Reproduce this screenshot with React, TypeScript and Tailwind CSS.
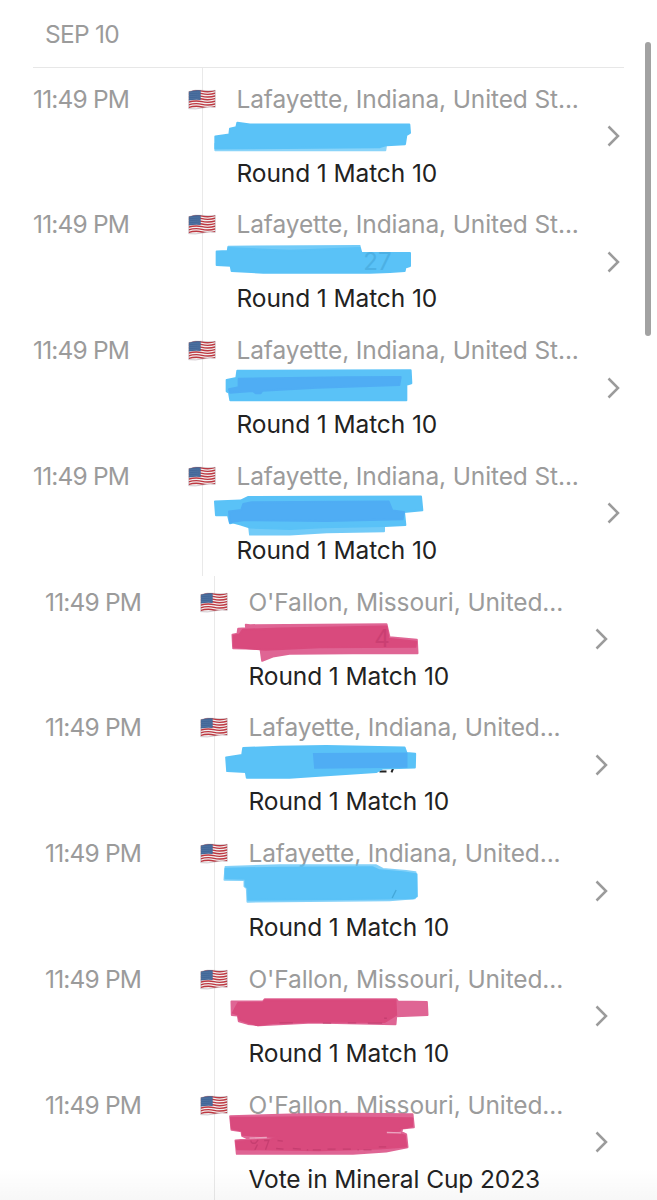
import { ReactNode } from "react";

type Entry = {
  time: string;
  place: string;
  title: string;
  // vertical offset of the marker drawing inside its line
  dy: number;
  marker: ReactNode;
};

const BLUE = "#5ac2f7";
const DEEP_BLUE = "#4fadf4";
const PINK = "#d94a7d";
const LIGHT_PINK = "#df6594";

function Ink({ d, color, opacity = 1 }: { d: string; color: string; opacity?: number }) {
  return (
    <path
      d={d}
      fill={color}
      stroke={color}
      strokeWidth="6"
      strokeLinejoin="round"
      opacity={opacity}
    />
  );
}

function Trace({ d, color }: { d: string; color: string }) {
  return <path d={d} fill="none" stroke={color} strokeWidth="4" opacity="0.4" />;
}

const firstEntries: Entry[] = [
  {
    time: "11:49 PM",
    place: "Lafayette, Indiana, United St...",
    title: "Round 1 Match 10",
    dy: -37.5,
    marker: (
      <>
        <Ink color={BLUE} opacity={0.7} d="M106 190L618 194L616 209L106 209Z" />
        <Ink color={BLUE} d="M106 168L148 162L150 145L169 140L172 127L210 132L688 132L690 157L679 164L675 191L620 194L600 200L106 204Z" />
      </>
    ),
  },
  {
    time: "11:49 PM",
    place: "Lafayette, Indiana, United St...",
    title: "Round 1 Match 10",
    dy: -43.25,
    marker: (
      <>
        <Ink color={BLUE} opacity={0.85} d="M145 141L539 139L539 180L145 180Z" />
        <Ink color={BLUE} d="M110 155L143 154L145 145L330 153L540 145L544 159L690 160L690 199L676 203L674 214L630 217L570 219L250 219L155 214L152 198L110 196Z" />
        <text x="550" y="211" fontSize="72" fill="#3f9fd2" opacity="0.5" fontFamily="Inter">
          27
        </text>
      </>
    ),
  },
  {
    time: "11:49 PM",
    place: "Lafayette, Indiana, United St...",
    title: "Round 1 Match 10",
    dy: -39,
    marker: (
      <>
        <Ink color={BLUE} d="M172 122L692 121L694 160L679 164L679 211L151 211L147 188L140 184L140 150L169 144Z" />
        <Ink color={DEEP_BLUE} d="M176 146L500 142L662 141L658 165L410 173L247 182L242 190L228 190L218 183L150 188L147 178L176 172Z" />
      </>
    ),
  },
  {
    time: "11:49 PM",
    place: "Lafayette, Indiana, United St...",
    title: "Round 1 Match 10",
    dy: -34.75,
    marker: (
      <>
        <Ink color={BLUE} opacity={0.85} d="M207 195L612 195L612 213L440 216L330 223L210 223Z" />
        <Ink color={BLUE} d="M105 124L182 121L205 110L723 109L727 150L672 155L676 194L614 197L430 201L330 206L210 202L182 193L160 187L150 189L144 165L108 165Z" />
        <Ink color={DEEP_BLUE} d="M190 131L215 126L626 124L637 151L672 155L668 177L440 182L190 180L163 184L150 187L147 154L184 149Z" />
      </>
    ),
  },
];

const secondEntries: Entry[] = [
  {
    time: "11:49 PM",
    place: "O'Fallon, Missouri, United...",
    title: "Round 1 Match 10",
    dy: -35.5,
    marker: (
      <>
        <Ink color={LIGHT_PINK} d="M199 118L212 119L621 116L630 155L712 163L714 203L520 203L330 205L280 213L248 226L243 190L161 188L159 148L174 145L176 130L200 128Z" />
        <Ink color={PINK} d="M162 151L180 147L190 133L300 129L621 123L627 160L710 169L708 184L420 185L258 193L163 184Z" />
        <text x="584" y="184" fontSize="72" fill="#b62f63" opacity="0.4" fontFamily="Inter">
          4
        </text>
      </>
    ),
  },
  {
    time: "11:49 PM",
    place: "Lafayette, Indiana, United...",
    title: "Round 1 Match 10",
    dy: -36.25,
    marker: (
      <>
        <path d="M600 185L621 185M642 173L636 188" fill="none" stroke="#222222" strokeWidth="6" />
        <Ink color={BLUE} d="M191 115L300 111L440 109L675 113L681 130L707 132L706 173L610 176L590 187L430 197L330 204L202 204L199 187L143 184L140 143L188 136Z" />
        <path d="M400 130L684 128L684 174L404 177Z" fill={DEEP_BLUE} />
      </>
    ),
  },
  {
    time: "11:49 PM",
    place: "Lafayette, Indiana, United...",
    title: "Round 1 Match 10",
    dy: -37,
    marker: (
      <>
        <Ink color={BLUE} opacity={0.75} d="M138 96L300 91L590 91L610 102L680 108L708 112L706 190L630 196L204 200L202 160L195 154L195 135L135 134Z" />
        <Ink color={BLUE} d="M138 101L300 98L580 97L600 106L670 112L711 118L712 184L700 190L430 193L206 194L206 160L198 152L198 131L138 130Z" />
        <Trace color="#237fac" d="M650 165L638 189" />
      </>
    ),
  },
  {
    time: "11:49 PM",
    place: "O'Fallon, Missouri, United...",
    title: "Round 1 Match 10",
    dy: -37.75,
    marker: (
      <>
        <Ink color={LIGHT_PINK} d="M156 124L250 124L256 117L650 117L656 124L742 125L744 164L650 168L648 192L400 187L240 195L205 191L178 183L175 166L157 164Z" />
        <Ink color={PINK} d="M176 128L250 127L257 120L648 120L650 164L616 185L400 184L280 188L235 195L205 187L180 178L176 163L160 158Z" />
        <Trace color="#a92e5c" d="M300 188L340 188M430 189L455 189M505 188L530 188M565 189L608 189M614 174L622 174" />
      </>
    ),
  },
  {
    time: "11:49 PM",
    place: "O'Fallon, Missouri, United...",
    title: "Vote in Mineral Cup 2023",
    dy: -43.5,
    marker: (
      <>
        <Ink color={LIGHT_PINK} d="M152 107L360 101L520 100L699 101L703 140L668 144L666 155L680 162L684 200L620 213L520 220L172 220L168 180L208 176L188 166L186 152L156 148Z" />
        <Ink color={PINK} d="M154 112L400 110L698 113L698 137L664 144L660 151L620 154L676 165L680 198L600 204L420 209L173 206L170 183L270 178L300 170L190 163L188 151L157 144Z" />
        {/* paler gaps between the strokes */}
        <path d="M210 173L262 171M622 156L664 157" fill="none" stroke="#eba3bf" strokeWidth="4" />
        {/* smudged leftovers showing through the ink */}
        <Trace color="#a92e5c" d="M214 180Q214 190 228 188L236 178M226 208L234 192M254 180L268 180L258 208M294 180L310 182M290 204L312 206M340 204L364 206M382 208L386 208M400 208L424 208M444 206L468 206M490 206L514 206M534 208L538 208M552 208L576 208M598 199L620 199" />
      </>
    ),
  },
];

function Flag() {
  return (
    <svg width="28" height="21" viewBox="0 0 84 63" className="relative">
      <defs>
        <clipPath id="flagShape">
          <path d="M2 8Q22 1 42 4T82 4V55Q62 52 42 57T2 59Z" />
        </clipPath>
      </defs>
      <g clipPath="url(#flagShape)">
        <rect width="84" height="63" fill="#f3eeee" />
        {[6, 14, 22, 30, 38, 46, 54].map((y) => (
          <path
            key={y}
            d={`M0 ${y + 2}Q22 ${y - 5} 42 ${y}T84 ${y - 2}`}
            fill="none"
            stroke="#bd3841"
            strokeWidth="4.3"
          />
        ))}
        <path d="M0 6Q20 2 38 4V33Q20 31 0 35Z" fill="#426798" />
        {[11, 17, 23, 29].map((y) => (
          <path
            key={y}
            d={`M5 ${y}L36 ${y - 2}`}
            stroke="#8ba6c7"
            strokeWidth="1.5"
            strokeDasharray="2 4"
          />
        ))}
      </g>
      <path d="M2 8Q22 1 42 4T82 4V55Q62 52 42 57T2 59Z" fill="none" stroke="#806f7c" strokeWidth="1.5" opacity="0.6" />
    </svg>
  );
}

function Row({ entry, inset }: { entry: Entry; inset: number }) {
  return (
    <li className="flex h-[125.75px] pt-[7.5px]">
      <div className="w-[155px] shrink-0 leading-[37px] tracking-[-0.82px] text-[#9b9b9b]">
        {entry.time}
      </div>
      <div className="flex h-[37px] w-12 shrink-0 items-center">
        <Flag />
      </div>
      <div className="grow leading-[37px] whitespace-nowrap">
        <p className="pl-[0.5px] tracking-[-0.12px] text-[#9b9b9b]">{entry.place}</p>
        <div className="h-[37px]">
          <svg width="1" height="37" className="relative block overflow-visible">
            <g transform={`translate(${-inset} ${entry.dy}) scale(0.33333)`}>{entry.marker}</g>
          </svg>
        </div>
        <p className="pl-[0.5px] tracking-[-0.1px] text-[#222222]">{entry.title}</p>
      </div>
      <div className="flex h-[111px] shrink-0 items-center">
        <svg width="13" height="22" viewBox="0 0 13 22" fill="none" stroke="#9b9b9b" strokeWidth="2.5">
          <path d="M1.5 1.5L11 11L1.5 20.5" />
        </svg>
      </div>
    </li>
  );
}

export default function App() {
  return (
    <main className="relative h-[1200px] w-[657px] overflow-hidden bg-white font-[Inter,sans-serif] text-[24.5px]">
      <h2 className="mr-[33px] ml-[33px] h-[68px] border-b border-[#e7e7e7] pl-3 leading-[68px] tracking-[-0.75px] text-[#9b9b9b]">
        SEP 10
      </h2>

      <section className="relative pt-[5px] pr-[37px] pl-[33px]">
        <div className="absolute top-0 bottom-0 left-[202px] w-px bg-[#e9e9e9]" />
        <ul>
          {firstEntries.map((entry, i) => (
            <Row key={i} entry={entry} inset={56} />
          ))}
        </ul>
      </section>

      <section className="relative pr-[49px] pl-[45px]">
        <div className="absolute top-0 bottom-0 left-[214px] w-px bg-[#e9e9e9]" />
        <ul>
          {secondEntries.map((entry, i) => (
            <Row key={i} entry={entry} inset={68.5} />
          ))}
        </ul>
      </section>

      <div className="absolute top-[42px] right-[6px] h-[294px] w-[6px] rounded-full bg-[#a2a2a2]" />
      <div className="pointer-events-none absolute bottom-0 h-8 w-full bg-linear-to-b from-black/0 to-black/3" />
    </main>
  );
}
